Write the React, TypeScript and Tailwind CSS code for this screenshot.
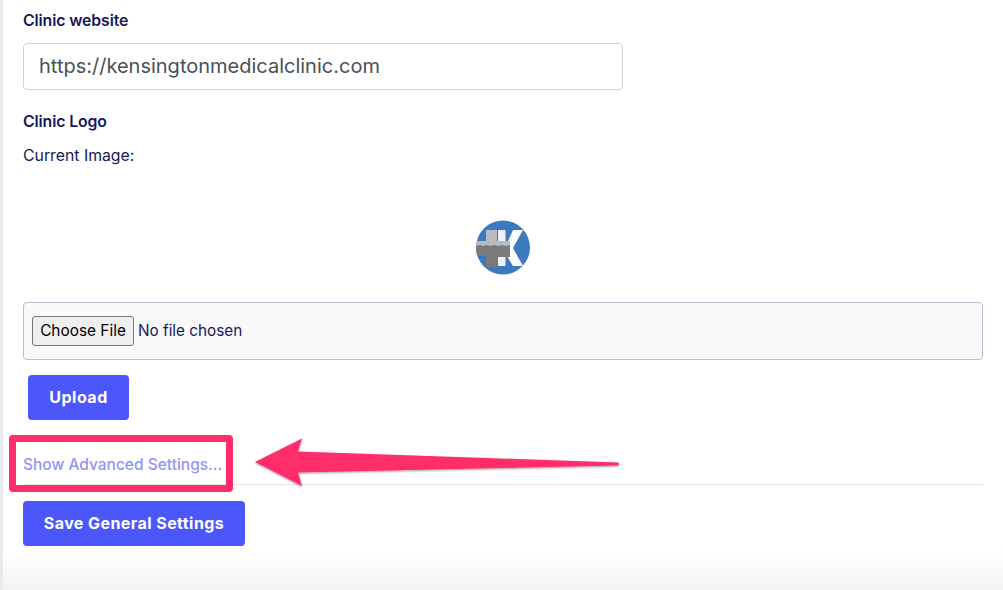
import React from 'react';

const inter = { fontFamily: 'Inter, sans-serif' };

const Logo = () => (
  <svg width="54" height="55" viewBox="0 0 54 55" className="blur-[0.5px]">
    <defs>
      <clipPath id="logo-clip">
        <circle cx="27" cy="27.5" r="27" />
      </clipPath>
    </defs>
    <g clipPath="url(#logo-clip)">
      <rect width="54" height="55" fill="#3d79c0" />
      <rect x="22" y="10" width="7.5" height="36" fill="#eef2f8" />
      <path d="M29 28L37 10h10l-10 18 10 18H37l-8-13z" fill="#ffffff" />
      <rect x="10" y="10" width="11" height="36" fill="#b9bcbd" />
      <rect x="0" y="21" width="34" height="15" fill="#b9bcbd" />
      <path d="M0 26l4-1 3 1 4-1 4 1 3-1 4 1 4-1 4 1 4-1v12H21v10H10V36H0z" fill="#7b7b7c" />
    </g>
  </svg>
);

// annotation arrow pointing at the advanced settings link
const Arrow = () => (
  <svg width="372" height="56" viewBox="0 0 372 56" className="absolute left-[252px] top-[434px]">
    <defs>
      <filter id="arrow-shadow" x="-5%" y="-20%" width="110%" height="150%">
        <feDropShadow dx="0" dy="1" stdDeviation="0.8" floodColor="#000" floodOpacity="0.4" />
      </filter>
    </defs>
    <path
      d="M3 28L50 4.5L46 17.5L366 28.5Q368 30 366 31.5L46 38.5L50 52Z"
      fill="#ff2d6b"
      filter="url(#arrow-shadow)"
    />
  </svg>
);

export default function App() {
  return (
    <div className="relative h-[590px] w-[1003px] overflow-hidden bg-white text-[#14195a]" style={inter}>
      <div className="flex h-full flex-col border-l-[3px] border-[#e9eaee] bg-gradient-to-b from-white from-[93%] to-[#f3f3f3] pl-5 pr-5">
        <label className="mt-[12px] text-[15.8px] font-semibold leading-[17px] tracking-[-0.1px]">Clinic website</label>
        <div className="mt-[14px] flex h-[47px] w-[600px] items-center rounded border border-[#ced4da] bg-white pb-[1px] pl-[15px] text-[20px] text-[#495057]">
          https://kensingtonmedicalclinic.com
        </div>
        <label className="mt-[23px] text-[15.8px] font-semibold leading-[17px] tracking-[-0.1px]">Clinic Logo</label>
        <p className="mt-[17px] text-[15.8px] leading-[17px]">Current Image:</p>
        <div className="mt-[56px] flex justify-center">
          <Logo />
        </div>
        <div className="mt-[27px] flex h-[58px] items-center rounded border border-[#b8bfd0] bg-[#f9f9fc] pl-2 text-[15.3px]">
          <button className="h-[30px] w-[102px] rounded-[3px] border border-[#767676] bg-[#efefef] text-[15.4px] text-black">
            Choose File
          </button>
          <span className="ml-1">No file chosen</span>
        </div>
        <button className="ml-[5px] mt-[15px] h-[45px] w-[101px] rounded bg-[#4c57fb] pb-[2px] text-[16px] font-bold tracking-[0.5px] text-white">
          Upload
        </button>
        <a className="mt-[36px] text-[15.5px] font-medium leading-[17px] text-[#8f97f7]">Show Advanced Settings...</a>
        <div className="mt-[11px] border-t border-[#e4e4e4]" />
        <button className="mt-[16px] h-[45px] w-[222px] rounded bg-[#4c57fb] pb-[2px] text-[16px] font-bold tracking-[0.43px] text-white">
          Save General Settings
        </button>
      </div>
      <div className="absolute left-[9px] top-[435px] h-[57px] w-[224px] rounded-[4px] border-[7px] border-[#ff2d6b]" />
      <Arrow />
    </div>
  );
}
